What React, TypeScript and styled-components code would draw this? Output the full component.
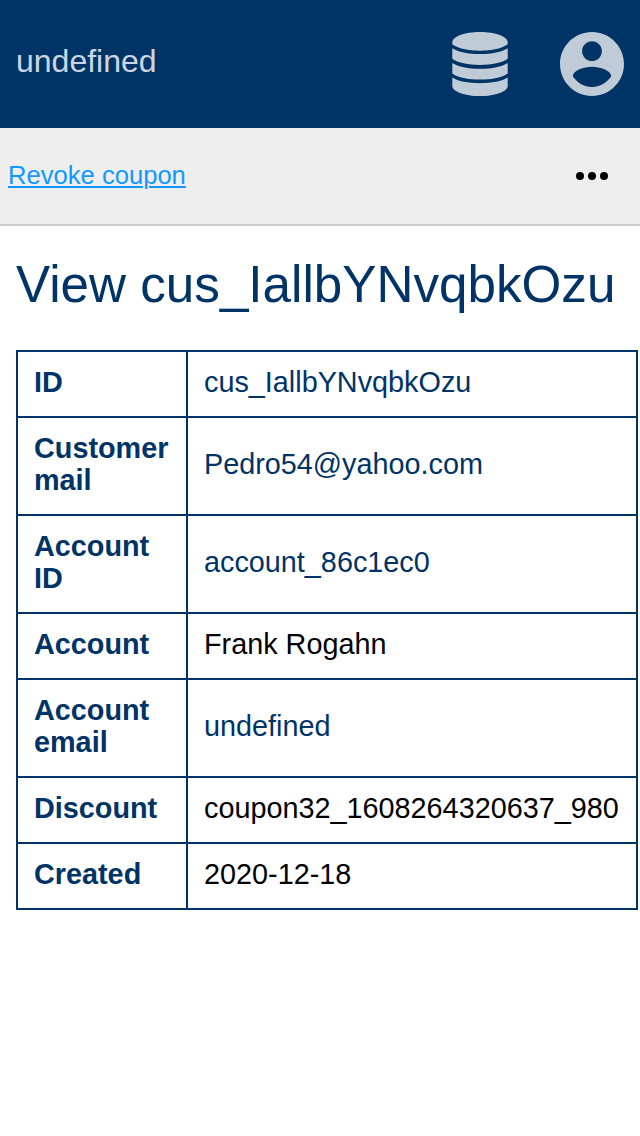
import React from "react";
import styled, { createGlobalStyle } from "styled-components";

const NAVY = "#003366";

const GlobalStyle = createGlobalStyle`
  * { box-sizing: border-box; }
  body {
    margin: 0;
    background: #fff;
    color: #000;
    font-family: "Liberation Sans", Arial, sans-serif;
  }
`;

const Page = styled.div`
  min-height: 1136px;
  overflow: hidden;
`;

const Header = styled.header`
  display: flex;
  align-items: center;
  justify-content: space-between;
  height: 128px;
  padding: 0 16px;
  background: ${NAVY};
  color: #fff;
`;

const Brand = styled.span`
  opacity: 0.8;
  font-size: 32px;
  line-height: 36px;
  padding-bottom: 6px;
`;

const HeaderIcons = styled.nav`
  display: flex;
  gap: 48px;
`;

const HeaderIcon = styled.svg`
  display: block;
  width: 64px;
  height: 64px;
  fill: #fff;
  opacity: 0.75;
`;

const Toolbar = styled.div`
  display: flex;
  align-items: center;
  justify-content: space-between;
  height: 98px;
  padding: 0 32px 0 8px;
  background: #eee;
  border-bottom: 2px solid #ccc;
`;

const ToolbarLink = styled.a`
  padding-bottom: 2px;
  color: #1199ff;
  font-size: 25.6px;
  line-height: 30px;
  text-decoration: underline;
  text-decoration-thickness: 2px;
  text-underline-offset: 2px;
`;

const MoreIcon = styled.svg`
  display: block;
  width: 32px;
  height: 8px;
`;

const Content = styled.main`
  padding: 30px 0 0 16px;
`;

const Title = styled.h1`
  margin: 0 0 36px;
  color: ${NAVY};
  font-size: 51.2px;
  font-weight: 400;
  line-height: 58px;
  white-space: nowrap;
`;

const DetailTable = styled.table`
  width: 622px;
  table-layout: fixed;
  border-collapse: collapse;
  font-size: 28.8px;
  line-height: 32px;
`;

const Label = styled.th`
  width: 170px;
  padding: 14px 16px 18px;
  border: 2px solid ${NAVY};
  color: ${NAVY};
  text-align: left;
  font-weight: 700;
`;

const Value = styled.td<{ $linked?: boolean }>`
  padding: 14px 16px 18px;
  border: 2px solid ${NAVY};
  color: ${(p) => (p.$linked ? NAVY : "#000")};
  white-space: nowrap;
`;

const rows = [
  { label: "ID", value: "cus_IallbYNvqbkOzu", linked: true },
  { label: "Customer mail", value: "Pedro54@yahoo.com", linked: true },
  { label: "Account ID", value: "account_86c1ec0", linked: true },
  { label: "Account", value: "Frank Rogahn", linked: false },
  { label: "Account email", value: "undefined", linked: true },
  { label: "Discount", value: "coupon32_1608264320637_980", linked: false },
  { label: "Created", value: "2020-12-18", linked: false },
];

export default function App() {
  return (
    <Page>
      <GlobalStyle />
      <Header>
        <Brand>undefined</Brand>
        <HeaderIcons>
          <HeaderIcon viewBox="0 0 64 64" aria-label="Database">
            <path d="M4.300 10.200C4.300 4.700 16.500 0 32 0s27.700 4.700 27.700 10.200v2.100C54 16.600 44 18.700 32 18.700S10 16.600 4.300 12.300z" />
            <path d="M4.300 16.300C10 20 20 22.100 32 22.100s22-2.100 27.700-5.800v10.500C54 30.800 44 33 32 33s-22-2.200-27.700-6.200z" />
            <path d="M4.300 30.900C10 34.600 20 36.700 32 36.700s22-2.100 27.700-5.800v10.500C54 45.400 44 47.500 32 47.500s-22-2.100-27.700-6.100z" />
            <path d="M4.300 45.500C10 49.200 20 51.200 32 51.200s22-2 27.700-5.700v8.400C59.700 59.400 47.500 64 32 64S4.300 59.400 4.300 53.900z" />
          </HeaderIcon>
          <HeaderIcon viewBox="2 2 20 20" aria-label="Account">
            <path d="M12 2C6.480 2 2 6.480 2 12s4.480 10 10 10 10-4.480 10-10S17.520 2 12 2zm0 2.900c1.700 0 3.080 1.380 3.080 3.080s-1.380 3.080-3.080 3.080-3.080-1.380-3.080-3.080S10.300 4.900 12 4.900zm0 14.300c-2.500 0-4.710-1.380-6-3.350.03-1.900 3.500-3 6-3s5.970 1.100 6 3c-1.290 1.970-3.500 3.350-6 3.350z" />
          </HeaderIcon>
        </HeaderIcons>
      </Header>
      <Toolbar>
        <ToolbarLink href="#">Revoke coupon</ToolbarLink>
        <MoreIcon viewBox="0 0 32 8" aria-label="More">
          <circle cx="4" cy="4" r="4" />
          <circle cx="16" cy="4" r="4" />
          <circle cx="28" cy="4" r="4" />
        </MoreIcon>
      </Toolbar>
      <Content>
        <Title>View cus_IallbYNvqbkOzu</Title>
        <DetailTable>
          <tbody>
            {rows.map((row) => (
              <tr key={row.label}>
                <Label scope="row">{row.label}</Label>
                <Value $linked={row.linked}>{row.value}</Value>
              </tr>
            ))}
          </tbody>
        </DetailTable>
      </Content>
    </Page>
  );
}
